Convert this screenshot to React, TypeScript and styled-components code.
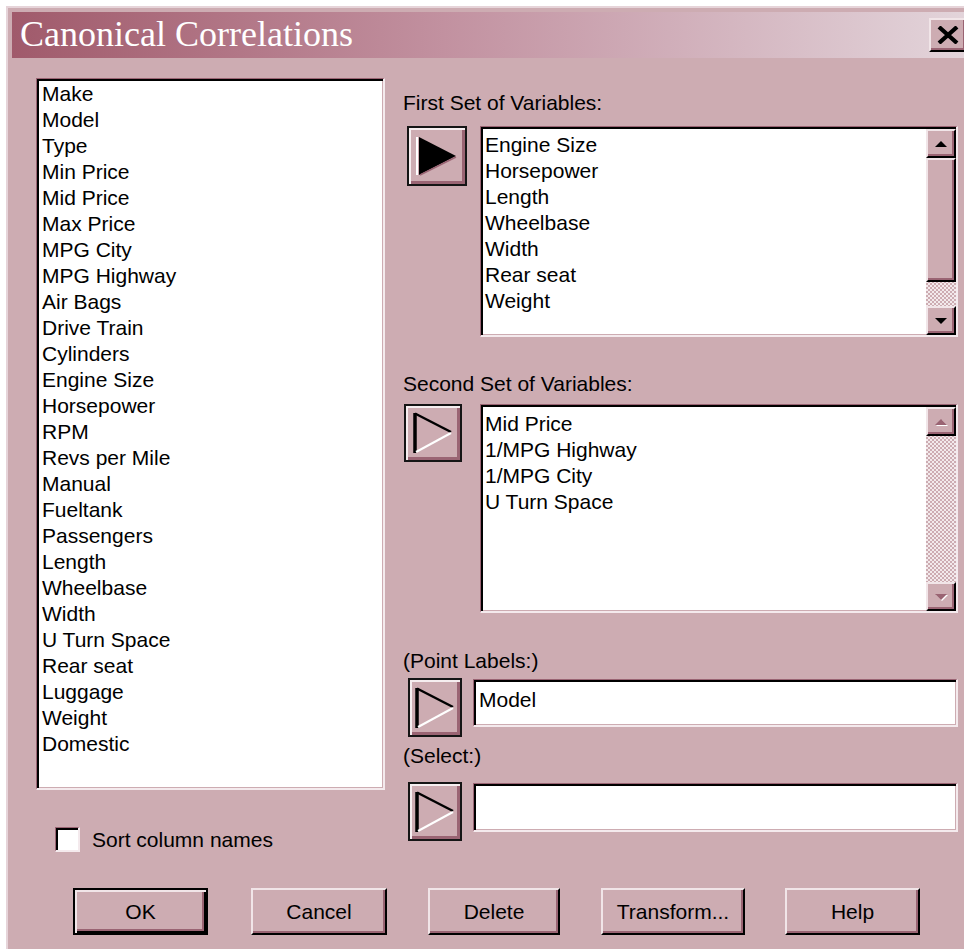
import React from "react";
import styled, { createGlobalStyle } from "styled-components";

const face = "#cdacb2";
const light = "#f1e5e8";
const shadow = "#9a6473";
const uiFont = `"Liberation Sans", Arial, sans-serif`;

const GlobalStyle = createGlobalStyle`
  html, body {
    margin: 0;
    padding: 0;
    background: #fff;
    overflow: hidden;
  }
  body {
    font-family: ${uiFont};
    font-size: 21px;
    color: #000;
  }
`;

const Dialog = styled.div`
  box-sizing: border-box;
  margin: 6px 0 0 6px;
  width: 970px;
  height: 960px;
  padding: 4px 4px 0 4px;
  background: ${face};
  border-top: 2px solid #e6d4d9;
  border-left: 2px solid #e6d4d9;
`;

const TitleBar = styled.div`
  height: 46px;
  display: flex;
  align-items: center;
  justify-content: space-between;
  padding-left: 8px;
  background: linear-gradient(to right, #a05a6b 0%, #c291a0 45%, #e3d5db 100%);
`;

const Title = styled.span`
  font-family: "Liberation Serif", "Times New Roman", serif;
  font-size: 36px;
  line-height: 1;
  color: #fff;
  margin-top: -2px;
`;

const CloseButton = styled.div`
  box-sizing: border-box;
  width: 38px;
  height: 34px;
  margin-right: 5px;
  display: flex;
  align-items: center;
  justify-content: center;
  background: ${face};
  border: 2px solid;
  border-color: ${light} #000 #000 ${light};
  box-shadow: inset -2px -2px 0 ${shadow};
`;

const Body = styled.div`
  display: grid;
  grid-template-columns: 349px 555px;
  column-gap: 18px;
  padding: 20px 0 0 24px;
`;

const Column = styled.div`
  display: flex;
  flex-direction: column;
`;

const Sunken = styled.div<{ $h: number }>`
  box-sizing: border-box;
  height: ${(p) => p.$h}px;
  background: #fff;
  border-style: solid;
  border-width: 1px 2px 2px 1px;
  border-color: ${shadow} #f4eaed #f4eaed ${shadow};
  box-shadow: inset 2px 2px 0 #000, inset -1px -1px 0 ${face};
  display: flex;
`;

const Items = styled.div<{ $pt: number; $pl: number }>`
  flex: 1;
  padding: ${(p) => p.$pt}px 0 0 ${(p) => p.$pl}px;
  overflow: hidden;
`;

const Item = styled.div`
  line-height: 26px;
  white-space: nowrap;
`;

const ScrollBar = styled.div`
  width: 30px;
  margin: 2px 0 0 0;
  display: flex;
  flex-direction: column;
  background: repeating-conic-gradient(${face} 0 25%, #f3eaec 0 50%) 0 0 / 4px 4px;
`;

const ScrollPart = styled.div<{ $h?: number }>`
  box-sizing: border-box;
  height: ${(p) => p.$h ?? 29}px;
  flex-shrink: 0;
  display: flex;
  align-items: center;
  justify-content: center;
  background: ${face};
  border: 2px solid;
  border-color: ${light} #000 #000 ${light};
  box-shadow: inset -2px -2px 0 ${shadow};
`;

const Track = styled.div`
  flex: 1;
`;

const Caret = styled.span<{ $up?: boolean; $off?: boolean }>`
  width: 0;
  height: 0;
  border-left: 6px solid transparent;
  border-right: 6px solid transparent;
  ${(p) =>
    p.$up
      ? `border-bottom: 6px solid ${p.$off ? shadow : "#000"};`
      : `border-top: 6px solid ${p.$off ? shadow : "#000"};`}
  ${(p) => (p.$off ? "filter: drop-shadow(1px 1px 0 #fff);" : "")}
`;

const CheckRow = styled.label`
  display: flex;
  align-items: center;
  margin: 37px 0 0 19px;
  height: 25px;
`;

const CheckBox = styled.span`
  box-sizing: border-box;
  width: 25px;
  height: 25px;
  background: #fff;
  border-style: solid;
  border-width: 1px 2px 2px 1px;
  border-color: ${shadow} #f4eaed #f4eaed ${shadow};
  box-shadow: inset 2px 2px 0 #000;
`;

const CheckLabel = styled.span`
  margin-left: 12px;
  line-height: 26px;
`;

const Label = styled.div<{ $mt: number }>`
  margin-top: ${(p) => p.$mt}px;
  line-height: 26px;
  white-space: nowrap;
`;

const Row = styled.div<{ $mt: number; $pl: number; $gap: number }>`
  display: flex;
  align-items: flex-start;
  margin-top: ${(p) => p.$mt}px;
  padding-left: ${(p) => p.$pl}px;
  gap: ${(p) => p.$gap}px;
  & > :last-child {
    flex: 1;
  }
`;

const ArrowButton = styled.div<{ $w: number; $h: number }>`
  box-sizing: border-box;
  flex-shrink: 0;
  width: ${(p) => p.$w}px;
  height: ${(p) => p.$h}px;
  display: flex;
  align-items: center;
  justify-content: center;
  background: ${face};
  border: 2px solid #151515;
  box-shadow: inset 2px 2px 0 #f6eef0, inset -3px -3px 0 ${shadow};
`;

const Field = styled(Sunken)<{ $mt: number }>`
  margin-top: ${(p) => p.$mt}px;
  align-items: flex-start;
`;

const FieldText = styled.div`
  padding: 7px 0 0 5px;
  line-height: 26px;
`;

const ButtonRow = styled.div`
  display: flex;
  margin-top: 36px;
  padding-left: 61px;
`;

const PushButton = styled.div<{ $w: number; $ml: number; $default?: boolean }>`
  box-sizing: border-box;
  width: ${(p) => p.$w}px;
  height: 47px;
  margin-left: ${(p) => p.$ml}px;
  display: flex;
  align-items: center;
  justify-content: center;
  background: ${face};
  border: 2px solid;
  border-color: ${(p) => (p.$default ? "#000" : `${light} #000 #000 ${light}`)};
  box-shadow: ${(p) =>
    p.$default
      ? `inset 2px 2px 0 ${light}, inset -2px -2px 0 #000, inset -4px -4px 0 ${shadow}`
      : `inset -2px -2px 0 ${shadow}`};
`;

const FilledArrow = () => (
  <svg width="42" height="40" viewBox="0 0 42 40">
    <line x1="1" y1="1" x2="1" y2="39" stroke="#fff" strokeWidth="2" />
    <polygon points="3,1 40,20 3,39" fill="#000" />
    <line x1="40" y1="21" x2="4" y2="39" stroke={shadow} strokeWidth="1.5" />
  </svg>
);

const OutlineArrow = () => (
  <svg width="42" height="42" viewBox="0 0 42 42">
    <line x1="3" y1="1" x2="3" y2="41" stroke="#000" strokeWidth="3.5" />
    <line x1="3" y1="1.5" x2="39" y2="20" stroke="#000" strokeWidth="2.5" />
    <line x1="39" y1="21" x2="4" y2="40" stroke="#fff" strokeWidth="2" />
  </svg>
);

const CloseGlyph = () => (
  <svg width="22" height="18" viewBox="0 0 22 18">
    <path d="M2 1 L20 17 M20 1 L2 17" stroke="#000" strokeWidth="4.2" />
  </svg>
);

const VScroll: React.FC<{ disabled?: boolean }> = ({ disabled }) => (
  <ScrollBar>
    <ScrollPart>
      <Caret $up $off={disabled} />
    </ScrollPart>
    {!disabled && <ScrollPart $h={124} />}
    <Track />
    <ScrollPart>
      <Caret $off={disabled} />
    </ScrollPart>
  </ScrollBar>
);

const columns = [
  "Make",
  "Model",
  "Type",
  "Min Price",
  "Mid Price",
  "Max Price",
  "MPG City",
  "MPG Highway",
  "Air Bags",
  "Drive Train",
  "Cylinders",
  "Engine Size",
  "Horsepower",
  "RPM",
  "Revs per Mile",
  "Manual",
  "Fueltank",
  "Passengers",
  "Length",
  "Wheelbase",
  "Width",
  "U Turn Space",
  "Rear seat",
  "Luggage",
  "Weight",
  "Domestic",
];

const firstSet = [
  "Engine Size",
  "Horsepower",
  "Length",
  "Wheelbase",
  "Width",
  "Rear seat",
  "Weight",
];

const secondSet = ["Mid Price", "1/MPG Highway", "1/MPG City", "U Turn Space"];

export default function App() {
  return (
    <>
      <GlobalStyle />
      <Dialog>
        <TitleBar>
          <Title>Canonical Correlations</Title>
          <CloseButton>
            <CloseGlyph />
          </CloseButton>
        </TitleBar>

        <Body>
          <Column>
            <Sunken $h={712}>
              <Items $pt={2} $pl={5}>
                {columns.map((c) => (
                  <Item key={c}>{c}</Item>
                ))}
              </Items>
            </Sunken>
            <CheckRow>
              <CheckBox />
              <CheckLabel>Sort column names</CheckLabel>
            </CheckRow>
          </Column>

          <Column>
            <Label $mt={12}>First Set of Variables:</Label>
            <Row $mt={10} $pl={4} $gap={13}>
              <ArrowButton $w={60} $h={60}>
                <FilledArrow />
              </ArrowButton>
              <Sunken $h={211}>
                <Items $pt={5} $pl={4}>
                  {firstSet.map((c) => (
                    <Item key={c}>{c}</Item>
                  ))}
                </Items>
                <VScroll />
              </Sunken>
            </Row>

            <Label $mt={34}>Second Set of Variables:</Label>
            <Row $mt={7} $pl={1} $gap={18}>
              <ArrowButton $w={58} $h={58}>
                <OutlineArrow />
              </ArrowButton>
              <Sunken $h={209}>
                <Items $pt={6} $pl={4}>
                  {secondSet.map((c) => (
                    <Item key={c}>{c}</Item>
                  ))}
                </Items>
                <VScroll disabled />
              </Sunken>
            </Row>

            <Label $mt={35}>(Point Labels:)</Label>
            <Row $mt={4} $pl={5} $gap={11}>
              <ArrowButton $w={54} $h={59}>
                <OutlineArrow />
              </ArrowButton>
              <Field $h={48} $mt={1}>
                <FieldText>Model</FieldText>
              </Field>
            </Row>

            <Label $mt={6}>(Select:)</Label>
            <Row $mt={13} $pl={5} $gap={11}>
              <ArrowButton $w={54} $h={59}>
                <OutlineArrow />
              </ArrowButton>
              <Field $h={49} $mt={1} />
            </Row>
          </Column>
        </Body>

        <ButtonRow>
          <PushButton $w={135} $ml={0} $default>
            OK
          </PushButton>
          <PushButton $w={136} $ml={43}>
            Cancel
          </PushButton>
          <PushButton $w={132} $ml={41}>
            Delete
          </PushButton>
          <PushButton $w={144} $ml={41}>
            Transform...
          </PushButton>
          <PushButton $w={135} $ml={40}>
            Help
          </PushButton>
        </ButtonRow>
      </Dialog>
    </>
  );
}
